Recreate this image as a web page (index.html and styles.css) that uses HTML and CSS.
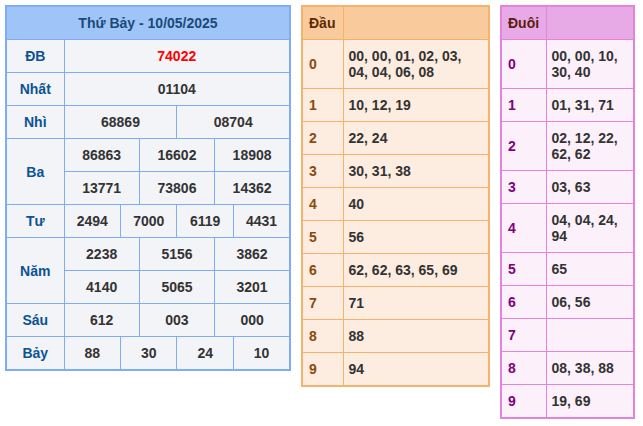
FILE: index.html
```html
<!DOCTYPE html>
<html>
<head>
<meta charset="utf-8">
<link rel="stylesheet" href="styles.css">
</head>
<body>
<div class="wrap">
  <table class="kq">
    <colgroup>
      <col class="c-lbl">
      <col><col><col><col><col><col><col><col><col><col><col><col>
    </colgroup>
    <tr class="hd"><th colspan="13">Thứ Bảy - 10/05/2025</th></tr>
    <tr><td class="lbl">ĐB</td><td colspan="12" class="db">74022</td></tr>
    <tr><td class="lbl">Nhất</td><td colspan="12">01104</td></tr>
    <tr><td class="lbl">Nhì</td><td colspan="6">68869</td><td colspan="6">08704</td></tr>
    <tr><td class="lbl" rowspan="2">Ba</td><td colspan="4">86863</td><td colspan="4">16602</td><td colspan="4">18908</td></tr>
    <tr><td colspan="4">13771</td><td colspan="4">73806</td><td colspan="4">14362</td></tr>
    <tr><td class="lbl">Tư</td><td colspan="3">2494</td><td colspan="3">7000</td><td colspan="3">6119</td><td colspan="3">4431</td></tr>
    <tr><td class="lbl" rowspan="2">Năm</td><td colspan="4">2238</td><td colspan="4">5156</td><td colspan="4">3862</td></tr>
    <tr><td colspan="4">4140</td><td colspan="4">5065</td><td colspan="4">3201</td></tr>
    <tr><td class="lbl">Sáu</td><td colspan="4">612</td><td colspan="4">003</td><td colspan="4">000</td></tr>
    <tr><td class="lbl">Bảy</td><td colspan="3">88</td><td colspan="3">30</td><td colspan="3">24</td><td colspan="3">10</td></tr>
  </table>

  <table class="lt dau">
    <colgroup><col class="c-k"><col></colgroup>
    <tr class="hd"><th>Đầu</th><th></th></tr>
    <tr><td class="k">0</td><td>00, 00, 01, 02, 03, 04, 04, 06, 08</td></tr>
    <tr><td class="k">1</td><td>10, 12, 19</td></tr>
    <tr><td class="k">2</td><td>22, 24</td></tr>
    <tr><td class="k">3</td><td>30, 31, 38</td></tr>
    <tr><td class="k">4</td><td>40</td></tr>
    <tr><td class="k">5</td><td>56</td></tr>
    <tr><td class="k">6</td><td>62, 62, 63, 65, 69</td></tr>
    <tr><td class="k">7</td><td>71</td></tr>
    <tr><td class="k">8</td><td>88</td></tr>
    <tr><td class="k">9</td><td>94</td></tr>
  </table>

  <table class="lt duoi">
    <colgroup><col class="c-k"><col></colgroup>
    <tr class="hd"><th>Đuôi</th><th></th></tr>
    <tr><td class="k">0</td><td>00, 00, 10, 30, 40</td></tr>
    <tr><td class="k">1</td><td>01, 31, 71</td></tr>
    <tr><td class="k">2</td><td>02, 12, 22, 62, 62</td></tr>
    <tr><td class="k">3</td><td>03, 63</td></tr>
    <tr><td class="k">4</td><td>04, 04, 24, 94</td></tr>
    <tr><td class="k">5</td><td>65</td></tr>
    <tr><td class="k">6</td><td>06, 56</td></tr>
    <tr><td class="k">7</td><td></td></tr>
    <tr><td class="k">8</td><td>08, 38, 88</td></tr>
    <tr><td class="k">9</td><td>19, 69</td></tr>
  </table>
</div>
</body>
</html>
```

FILE: styles.css
```css
html, body {
  margin: 0;
  padding: 0;
  background: #ffffff;
}
body {
  font-family: "Liberation Sans", Arial, sans-serif;
  font-size: 14px;
  font-weight: bold;
  color: #333333;
}
.wrap {
  display: flex;
  align-items: flex-start;
  gap: 10px;
  padding: 5px;
}
table {
  border-collapse: collapse;
  table-layout: fixed;
}
th, td {
  padding: 0;
  line-height: 16px;
  font-weight: bold;
}

/* results table */
.kq {
  width: 286px;
  border: 2px solid #7eacf6;
}
.kq .c-lbl { width: 58px; }
.kq th, .kq td {
  border: 1px solid #7eacf6;
  text-align: center;
  height: 32px;
  background: #f3f4f8;
  color: #333333;
}
.kq .hd th {
  background: #9fc5f8;
  color: #1c4a78;
  height: 32px;
  font-size: 14px;
}
.kq .lbl { color: #0b5394; }
.kq .db { color: #ff0000; }

/* loto tables */
.lt th, .lt td {
  height: 32px;
  text-align: left;
  vertical-align: middle;
  padding: 8px 10px 8px 5px;
  box-sizing: border-box;
}
.lt th { padding-left: 6px; }
.lt .k { padding-left: 6px; }

.dau {
  width: 189px;
  border: 2px solid #f6b26b;
}
.dau .c-k { width: 41px; }
.dau th, .dau td {
  border: 1px solid #f6b26b;
  background: #fdece0;
}
.dau .hd th {
  background: #f9cb9c;
  color: #5c2a06;
}
.dau .k { color: #8b4a0e; }

.duoi {
  width: 135px;
  border: 2px solid #e483dc;
}
.duoi .c-k { width: 45px; }
.duoi th, .duoi td {
  border: 1px solid #e483dc;
  background: #fcf0fa;
}
.duoi .hd th {
  background: #e8aae6;
  color: #5c1d0c;
}
.duoi .k { color: #800080; }
```
